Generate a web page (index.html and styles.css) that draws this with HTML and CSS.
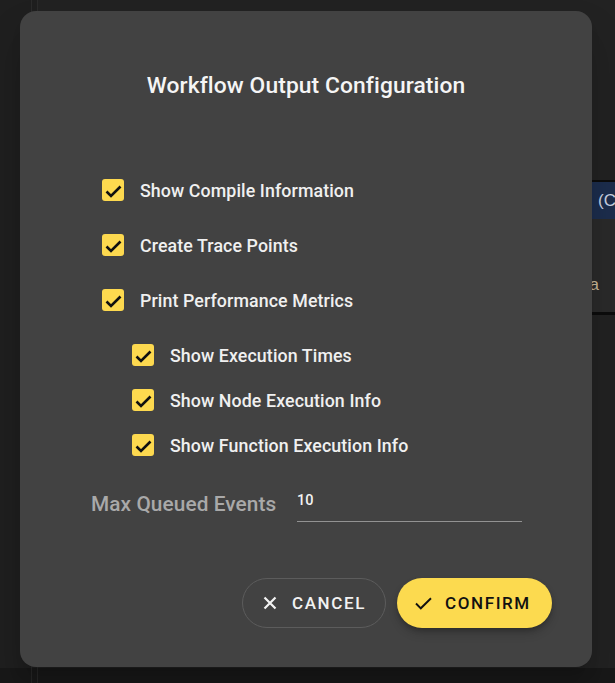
FILE: index.html
```html
<!DOCTYPE html>
<html>
<head>
<meta charset="utf-8">
<link rel="stylesheet" href="styles.css">
</head>
<body>
<div class="page">
  <div class="upper">
    <div class="rail"></div>
    <div class="rail2"></div>
    <div class="main">
      <div class="bar"><span class="bar-text">(C</span></div>
      <div class="panel"><span class="panel-text">a</span></div>
    </div>
  </div>
  <div class="footer">
    <div class="rail"></div>
    <div class="rail2"></div>
  </div>
</div>

<div class="dialog">
  <h1 class="title">Workflow Output Configuration</h1>

  <div class="options">
    <label class="row">
      <span class="box"><svg viewBox="0 0 22 22"><polyline points="4.5,12.5 9,17 18.5,7.5"/></svg></span>
      <span class="label">Show Compile Information</span>
    </label>
    <label class="row">
      <span class="box"><svg viewBox="0 0 22 22"><polyline points="4.5,12.5 9,17 18.5,7.5"/></svg></span>
      <span class="label">Create Trace Points</span>
    </label>
    <label class="row">
      <span class="box"><svg viewBox="0 0 22 22"><polyline points="4.5,12.5 9,17 18.5,7.5"/></svg></span>
      <span class="label">Print Performance Metrics</span>
    </label>
    <div class="nested">
      <label class="row sub">
        <span class="box"><svg viewBox="0 0 22 22"><polyline points="4.5,12.5 9,17 18.5,7.5"/></svg></span>
        <span class="label">Show Execution Times</span>
      </label>
      <label class="row sub">
        <span class="box"><svg viewBox="0 0 22 22"><polyline points="4.5,12.5 9,17 18.5,7.5"/></svg></span>
        <span class="label">Show Node Execution Info</span>
      </label>
      <label class="row sub">
        <span class="box"><svg viewBox="0 0 22 22"><polyline points="4.5,12.5 9,17 18.5,7.5"/></svg></span>
        <span class="label">Show Function Execution Info</span>
      </label>
    </div>
  </div>

  <div class="field">
    <span class="field-label">Max Queued Events</span>
    <div class="input"><span class="input-value">10</span></div>
  </div>

  <div class="actions">
    <button class="btn btn-cancel">
      <svg class="ic-x" viewBox="0 0 14 14"><path d="M1.5 1.5 L12.5 12.5 M12.5 1.5 L1.5 12.5"/></svg>
      <span>CANCEL</span>
    </button>
    <button class="btn btn-confirm">
      <svg class="ic-check" viewBox="0 0 17 13"><polyline points="1,6.5 5.8,11.3 16,1.2"/></svg>
      <span>CONFIRM</span>
    </button>
  </div>
</div>
</body>
</html>
```

FILE: styles.css
```css
* { box-sizing: border-box; }

html, body {
  margin: 0;
  padding: 0;
  width: 615px;
  height: 683px;
  overflow: hidden;
  background: #1f1f1f;
  font-family: Roboto, "Noto Sans", sans-serif;
}

.page {
  display: flex;
  flex-direction: column;
  height: 683px;
}

.upper {
  display: flex;
  height: 668px;
}

.rail {
  flex: none;
  width: 32px;
  border-right: 1px solid #2b2b2b;
}

.rail2 {
  flex: none;
  width: 6px;
  border-right: 1px solid #2b2b2b;
}

.main {
  flex: 1;
  min-width: 0;
  padding-top: 180px;
  background: #222222;
}

.bar {
  height: 39px;
  border-top: 2px solid #0c0c0c;
  background: #1c2d4d;
  display: flex;
  align-items: center;
  justify-content: flex-end;
  overflow: hidden;
  white-space: nowrap;
}

.bar-text {
  color: #c9d3e2;
  font-size: 17px;
  width: 17px;
  font-family: "Liberation Sans", Arial, sans-serif;
}

.panel {
  height: 96px;
  background: #2a2a2a;
  border-bottom: 3px solid #0c0c0c;
  display: flex;
  align-items: center;
  justify-content: flex-end;
  padding-right: 16px;
  padding-top: 39px;
}

.panel-text {
  color: #cbb999;
  font-size: 17px;
  font-family: "Liberation Sans", Arial, sans-serif;
}

.footer {
  display: flex;
  flex: 1;
  background: #181818;
}

.footer .rail, .footer .rail2 { border-right-color: #262626; }

/* Dialog overlay */
.dialog {
  position: absolute;
  left: 20px;
  top: 11px;
  width: 572px;
  height: 656px;
  background: #424242;
  border-radius: 16px;
  box-shadow: 0 11px 15px -7px rgba(0,0,0,0.2), 0 24px 38px 3px rgba(0,0,0,0.14);
  padding: 61px 40px 39px 0;
  display: flex;
  flex-direction: column;
}

.title {
  margin: 0;
  padding-left: 40px;
  text-align: center;
  font-size: 22.8px;
  line-height: 28px;
  font-weight: 500;
  color: #f5f5f5;
  letter-spacing: 0.1px;
}

.options {
  margin-top: 62.5px;
  padding-left: 82px;
  display: flex;
  flex-direction: column;
}

.row {
  display: flex;
  align-items: center;
  height: 55px;
  gap: 16px;
}

.nested {
  margin-top: 5px;
  padding-left: 30px;
  display: flex;
  flex-direction: column;
}

.row.sub { height: 45px; }

.box {
  width: 22px;
  height: 22px;
  border-radius: 3px;
  background: #fdd94f;
  display: flex;
  flex: none;
}

.box svg {
  width: 22px;
  height: 22px;
}

.box polyline {
  fill: none;
  stroke: #111;
  stroke-width: 2.6;
}

.label {
  font-size: 17.8px;
  font-weight: 500;
  color: #f0f0f0;
  letter-spacing: 0.1px;
}

.field {
  margin-top: 18.5px;
  height: 36px;
  display: flex;
  align-items: center;
  padding-left: 71px;
}

.field-label {
  width: 206px;
  font-size: 20.8px;
  font-weight: 500;
  color: #a9a9a9;
  letter-spacing: 0.1px;
}

.input {
  width: 225px;
  height: 36px;
  border-bottom: 1px solid #929292;
  padding-top: 7px;
}

.input-value {
  font-size: 14.5px;
  line-height: 16px;
  font-weight: 500;
  color: #f2f2f2;
  display: block;
}

.actions {
  margin-top: auto;
  display: flex;
  justify-content: flex-end;
  gap: 11px;
}

.btn {
  height: 50px;
  border-radius: 25px;
  display: flex;
  align-items: center;
  font-family: Roboto, "Noto Sans", sans-serif;
  font-size: 17px;
  font-weight: 500;
  letter-spacing: 1.6px;
  cursor: pointer;
}

.btn-cancel {
  width: 144px;
  padding: 0 0 0 20px;
  background: transparent;
  border: 1px solid #5c5c5c;
  color: #f2f2f2;
  gap: 15px;
}

.ic-x {
  width: 14px;
  height: 14px;
}

.ic-x path {
  fill: none;
  stroke: #f2f2f2;
  stroke-width: 2.2;
}

.btn-confirm {
  width: 155px;
  padding: 0 0 0 18px;
  background: #fcda4f;
  border: none;
  color: #111;
  gap: 13px;
  box-shadow: 0 3px 5px -1px rgba(0,0,0,0.25), 0 6px 10px 0 rgba(0,0,0,0.14);
}

.ic-check {
  width: 17px;
  height: 13px;
}

.ic-check polyline {
  fill: none;
  stroke: #111;
  stroke-width: 1.9;
}
```
